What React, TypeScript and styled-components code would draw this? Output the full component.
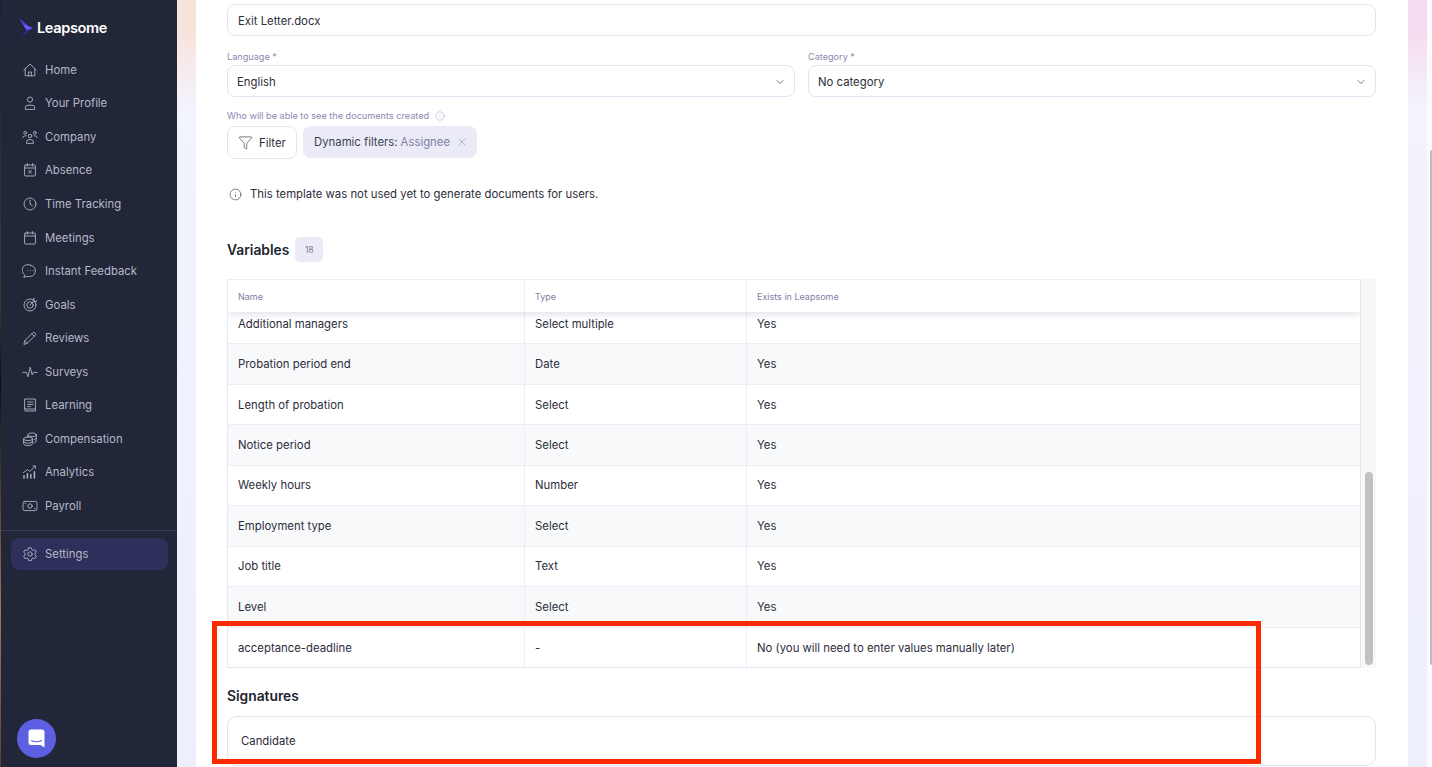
import React from 'react'
import styled, { createGlobalStyle } from 'styled-components'
import { ChevronDown, Funnel, Info, X } from 'lucide-react'

const GlobalStyle = createGlobalStyle`
  html, body {
    margin: 0;
    padding: 0;
    height: 100%;
    overflow: hidden;
    background: #ffffff;
    font-family: "Inter", "Lato", sans-serif;
  }
  #root { height: 100%; }
  * { box-sizing: border-box; }
`

const Page = styled.div`
  position: relative;
  display: flex;
  width: 1432px;
  height: 767px;
  overflow: hidden;
`

const WallpaperEdge = styled.div`
  width: 1px;
  flex: none;
  background: linear-gradient(180deg, #16223a 0%, #1f3a3a 25%, #3a3a30 40%, #0c0c10 50%, #a07a50 80%, #5a4038 100%);
`

const Sidebar = styled.nav`
  width: 176px;
  flex: none;
  background: #222639;
  display: flex;
  flex-direction: column;
  position: relative;
`

const Brand = styled.div`
  display: flex;
  align-items: center;
  gap: 3px;
  height: 53px;
  padding: 2px 0 0 17px;
  color: #ffffff;
  font-size: 14.6px;
  font-weight: 600;
  letter-spacing: -0.4px;
`

const NavList = styled.div`
  display: flex;
  flex-direction: column;
  padding-left: 10px;
`

const NavItem = styled.div`
  display: flex;
  align-items: center;
  height: 33.55px;
  gap: 7px;
  padding-left: 10px;
  color: #b6b9c8;
  font-size: 11.35px;
`

const IconSlot = styled.span`
  width: 17px;
  height: 17px;
  flex: none;
  display: flex;
  align-items: center;
  justify-content: center;
  color: #b0b3c4;
`

const NavDivider = styled.div`
  height: 1px;
  margin-top: 7px;
  background: #3a3e52;
`

const ActiveItem = styled(NavItem)`
  height: 32px;
  width: 157px;
  margin: 7px 0 0 10px;
  background: #2f2f5c;
  border-radius: 8px;
`

const ChatBubble = styled.div`
  position: absolute;
  left: 16px;
  bottom: 9px;
  width: 39px;
  height: 39px;
  border-radius: 50%;
  background: #5c5fe0;
  display: flex;
  align-items: center;
  justify-content: center;
`

const Backdrop = styled.div<{ $top: string }>`
  flex: none;
  width: 19px;
  background: linear-gradient(180deg, ${(p) => p.$top} 0%, ${(p) => p.$top} 4%, #f3f3fd 14%, #eeeffc 100%);
`

const Card = styled.main`
  width: 1212px;
  flex: none;
  background: #ffffff;
  padding: 4px 32px 0 31px;
  color: #2b2d3a;
  font-size: 11.35px;
`

const TextField = styled.div`
  height: 32px;
  border: 1px solid #e4e3f3;
  border-radius: 8px;
  display: flex;
  align-items: center;
  justify-content: space-between;
  padding: 1px 8px 0 10px;
  background: #ffffff;
`

const SelectField = styled(TextField)`
  padding-left: 9px;
`

const FieldRow = styled.div`
  display: grid;
  grid-template-columns: 1fr 1fr;
  gap: 13px;
  margin-top: 12px;
`

const FieldLabel = styled.div<{ $top?: number }>`
  color: #8b88ae;
  font-size: 9.15px;
  line-height: 17px;
  height: 17px;
  margin-top: ${(p) => p.$top ?? 0}px;
  display: flex;
  align-items: center;
  gap: 6px;
`

const FilterRow = styled.div`
  display: flex;
  gap: 6px;
  margin-top: 2px;
`

const FilterButton = styled.div`
  height: 33px;
  width: 70px;
  border: 1px solid #e4e3f3;
  border-radius: 8px;
  display: flex;
  align-items: center;
  gap: 6px;
  padding-left: 10px;
`

const Chip = styled.div`
  height: 32px;
  width: 174px;
  background: #ebebf7;
  border-radius: 8px;
  display: flex;
  align-items: center;
  padding-left: 11px;
  gap: 3px;
  color: #3d3f52;
`

const ChipValue = styled.span`
  color: #7f7da3;
  margin-right: 3px;
`

const Notice = styled.div`
  display: flex;
  align-items: center;
  gap: 8px;
  margin: 27px 0 0 2px;
  height: 16px;
`

const SectionHeading = styled.div<{ $top: number }>`
  display: flex;
  align-items: center;
  gap: 6px;
  margin-top: ${(p) => p.$top}px;
  font-size: 13.8px;
  font-weight: 600;
  color: #22242f;
  height: 25px;
`

const CountBadge = styled.span`
  width: 28px;
  height: 25px;
  background: #ebebf7;
  border-radius: 5px;
  color: #7f7da3;
  font-size: 8.6px;
  font-weight: 400;
  display: flex;
  align-items: center;
  justify-content: center;
`

const TableFrame = styled.div`
  position: relative;
  margin-top: 17px;
  height: 389px;
  display: flex;
  overflow: hidden;
`

const TableArea = styled.div`
  flex: 1;
  min-width: 0;
  border-left: 1px solid #e9e8f5;
  border-top: 1px solid #eeedf7;
  border-right: 1px solid #e4e3f3;
  border-bottom: 1px solid #e4e3f3;
  overflow: hidden;
  position: relative;
`

const Row = styled.div<{ $striped?: boolean }>`
  display: grid;
  grid-template-columns: 297px 222px 1fr;
  height: 40.45px;
  background: ${(p) => (p.$striped ? '#f8f9fb' : '#ffffff')};
  border-bottom: 1px solid #eeedf7;
  &:last-child { border-bottom: none; }
`

const HeaderRow = styled(Row)`
  position: relative;
  z-index: 1;
  height: 32px;
  background: #ffffff;
  border-bottom: none;
  box-shadow: 0 2px 8px rgba(60, 58, 110, 0.16);
  margin-bottom: -8px;
`

const Cell = styled.div`
  display: flex;
  align-items: center;
  padding-left: 10px;
  border-right: 1px solid #eeedf7;
  &:last-child { border-right: none; }
`

const HeaderCell = styled(Cell)`
  color: #7f7da3;
  font-size: 9px;
`

const ScrollTrack = styled.div`
  width: 15px;
  flex: none;
  background: #f8f8f8;
  padding: 193px 3px 3px 4px;
`

const ScrollThumb = styled.div`
  height: 100%;
  background: #c1c1c1;
  border-radius: 4px;
`

const SignatureCard = styled.div`
  height: 50px;
  margin-top: 8px;
  border: 1px solid #e4e3f3;
  border-radius: 10px;
  display: flex;
  align-items: center;
  padding: 0 13px;
`

const OuterGutter = styled.div`
  flex: 1;
  position: relative;
  background: #fbfbfd;
`

const OuterThumb = styled.div`
  position: absolute;
  right: 0;
  top: 150px;
  width: 2px;
  height: 515px;
  background: #bdbdbd;
  border-radius: 2px 0 0 2px;
`

const Highlight = styled.div`
  position: absolute;
  left: 212px;
  top: 621px;
  width: 1049px;
  height: 143px;
  border: 5px solid #fb2a00;
  pointer-events: none;
`

const Glyph = ({ children }: { children: React.ReactNode }) => (
  <svg width="16" height="16" viewBox="0 0 16 16" fill="none" stroke="currentColor" strokeWidth="0.9" strokeLinecap="round" strokeLinejoin="round">
    {children}
  </svg>
)

const navItems: { label: string; icon: React.ReactNode }[] = [
  { label: 'Home', icon: <><path d="M1.8 8 8 2 14.2 8" /><path d="M3.2 7v6.8h9.6V7" /><path d="M6.6 13.8V10h2.8v3.8" /></> },
  { label: 'Your Profile', icon: <><circle cx="8" cy="4.6" r="2.6" /><path d="M3.3 14v-1.2a2.6 2.6 0 0 1 2.6-2.6h4.2a2.6 2.6 0 0 1 2.6 2.6V14z" /></> },
  { label: 'Company', icon: <><circle cx="8" cy="7" r="1.7" /><path d="M4.6 14v-1a2.4 2.4 0 0 1 2.4-2.4h2a2.4 2.4 0 0 1 2.4 2.4v1z" /><circle cx="3.2" cy="3.8" r="1.4" /><circle cx="12.8" cy="3.8" r="1.4" /><path d="M0.8 8.6a2.4 2.4 0 0 1 2.4-1.8h1" /><path d="M15.2 8.6a2.4 2.4 0 0 0-2.4-1.8h-1" /></> },
  { label: 'Absence', icon: <><rect x="2.6" y="3" width="10.8" height="11" rx="1" /><path d="M2.6 6h10.8M5.4 1.6v2.4M10.6 1.6v2.4M6.6 8.4l2.8 2.8M9.4 8.4l-2.8 2.8" /></> },
  { label: 'Time Tracking', icon: <><circle cx="8" cy="8" r="6" /><path d="M8 4.2V8l2.4 1.8" /></> },
  { label: 'Meetings', icon: <><rect x="2.6" y="3" width="10.8" height="11" rx="1" /><path d="M2.6 6h10.8M5.4 1.6v2.4M10.6 1.6v2.4" /></> },
  { label: 'Instant Feedback', icon: <><path d="M8.8 2.4a5.6 5.6 0 0 1 0 11H5L1.8 14.4l1-2.4a5.6 5.6 0 0 1 6-9.6z" /><path d="M5.8 7.6h.1M8.6 7.6h.1M11.2 7.6h.1" /></> },
  { label: 'Goals', icon: <><circle cx="8" cy="8" r="6" /><circle cx="8" cy="8" r="3.2" /><path d="M8 8l4.6-4.6M11 3.4V2l1.4-.6M12.6 5h1.4l.6-1.4" /></> },
  { label: 'Reviews', icon: <><path d="M2 14l.9-3.4L10.8 2.7a1.4 1.4 0 0 1 2 0l.5.5a1.4 1.4 0 0 1 0 2L5.4 13.1z" /><path d="M9.8 3.8l2.4 2.4M2.9 10.6l2.5 2.5" /></> },
  { label: 'Surveys', icon: <path d="M0.8 8.4h3.6L6 12.8l2.2-9.6 2 7.6 1-2.4h4" /> },
  { label: 'Learning', icon: <><path d="M3 2h10.4v10H3z" /><path d="M3 12v2h10.4v-2M5.6 5h5.4M5.6 7.4h5.4M5.6 9.6h2.8" /></> },
  { label: 'Compensation', icon: <><ellipse cx="10" cy="3.8" rx="4.2" ry="1.8" /><path d="M14.2 3.8v6.4c0 .8-1 1.4-2.2 1.6M14.2 7c0 .8-1 1.5-2.2 1.7M5.8 4.4v2" /><ellipse cx="6" cy="7.8" rx="4.4" ry="1.8" /><path d="M1.6 7.8v5c0 1 2 1.8 4.4 1.8s4.4-.8 4.4-1.8v-5M1.6 10.4c0 1 2 1.8 4.4 1.8s4.4-.8 4.4-1.8" /></> },
  { label: 'Analytics', icon: <><path d="M1.4 8.6l4-3 2.4 1.8 5.4-5M10.8 2h2.6v2.4" /><path d="M2 14v-2.2M5.4 14V9.8M8.8 14v-3.4M12.4 14V7.8" strokeWidth="1.5" /></> },
  { label: 'Payroll', icon: <><rect x="1" y="3.4" width="14" height="9.2" rx="1.8" /><circle cx="8" cy="8" r="2.2" /><path d="M3 5.4h.6M12.4 10.6h.6" /></> },
]

const variables = [
  ['Additional managers', 'Select multiple', 'Yes'],
  ['Probation period end', 'Date', 'Yes'],
  ['Length of probation', 'Select', 'Yes'],
  ['Notice period', 'Select', 'Yes'],
  ['Weekly hours', 'Number', 'Yes'],
  ['Employment type', 'Select', 'Yes'],
  ['Job title', 'Text', 'Yes'],
  ['Level', 'Select', 'Yes'],
  ['acceptance-deadline', '-', 'No (you will need to enter values manually later)'],
]

const LeapsomeMark = () => (
  <svg width="16" height="20" viewBox="0 0 16 20">
    <path d="M1 0 L14 11 L8 12 Z" fill="#4a3fd8" />
    <path d="M14 11 L8 12 L3 19 Z" fill="#2f2a8f" />
    <path d="M5 6 L15 10 L9 12 Z" fill="#6a5cff" />
  </svg>
)

const MessengerIcon = () => (
  <svg width="17" height="19" viewBox="0 0 17 19">
    <path d="M3 0.5 H14 A2.5 2.5 0 0 1 16.5 3 V18.5 L12.5 16 H3 A2.5 2.5 0 0 1 0.5 13.5 V3 A2.5 2.5 0 0 1 3 0.5 Z" fill="#ffffff" />
    <path d="M3.5 11.5 Q8.5 14 13.5 11.5" fill="none" stroke="#5c5fe0" strokeWidth="1.1" strokeLinecap="round" />
  </svg>
)

const SettingsGlyph = () => (
  <Glyph>
    <path d="M6.6 1.8h2.8l.4 1.8 1.4.8 1.8-.6 1.4 2.4-1.4 1.2v1.6l1.4 1.2-1.4 2.4-1.8-.6-1.4.8-.4 1.8H6.6l-.4-1.8-1.4-.8-1.8.6-1.4-2.4 1.4-1.2V7.4L1.6 6.2 3 3.8l1.8.6 1.4-.8z" />
    <circle cx="8" cy="8" r="2.2" />
  </Glyph>
)

export default function App() {
  return (
    <Page>
      <GlobalStyle />
      <WallpaperEdge />
      <Sidebar>
        <Brand>
          <LeapsomeMark />
          Leapsome
        </Brand>
        <NavList>
          {navItems.map(({ label, icon }) => (
            <NavItem key={label}>
              <IconSlot><Glyph>{icon}</Glyph></IconSlot>
              {label}
            </NavItem>
          ))}
        </NavList>
        <NavDivider />
        <ActiveItem>
          <IconSlot><SettingsGlyph /></IconSlot>
          Settings
        </ActiveItem>
        <ChatBubble><MessengerIcon /></ChatBubble>
      </Sidebar>
      <Backdrop $top="#f8e3dc" />
      <Card>
        <TextField>Exit Letter.docx</TextField>
        <FieldRow>
          <div>
            <FieldLabel>Language *</FieldLabel>
            <SelectField>English<ChevronDown size={12} strokeWidth={1.3} /></SelectField>
          </div>
          <div>
            <FieldLabel>Category *</FieldLabel>
            <SelectField>No category<ChevronDown size={12} strokeWidth={1.3} /></SelectField>
          </div>
        </FieldRow>
        <FieldLabel $top={10}>
          Who will be able to see the documents created
          <Info size={10} strokeWidth={1} />
        </FieldLabel>
        <FilterRow>
          <FilterButton><Funnel size={15} strokeWidth={1} />Filter</FilterButton>
          <Chip>
            Dynamic filters: <ChipValue>Assignee</ChipValue>
            <X size={12} strokeWidth={1} color="#7f7da3" />
          </Chip>
        </FilterRow>
        <Notice>
          <Info size={13} strokeWidth={1.1} />
          This template was not used yet to generate documents for users.
        </Notice>
        <SectionHeading $top={35}>
          Variables
          <CountBadge>18</CountBadge>
        </SectionHeading>
        <TableFrame>
          <TableArea>
            <HeaderRow>
              <HeaderCell>Name</HeaderCell>
              <HeaderCell>Type</HeaderCell>
              <HeaderCell>Exists in Leapsome</HeaderCell>
            </HeaderRow>
            {variables.map((row, i) => (
              <Row key={row[0]} $striped={i % 2 === 1}>
                {row.map((value) => <Cell key={value}>{value}</Cell>)}
              </Row>
            ))}
          </TableArea>
          <ScrollTrack><ScrollThumb /></ScrollTrack>
        </TableFrame>
        <SectionHeading $top={15}>Signatures</SectionHeading>
        <SignatureCard>Candidate</SignatureCard>
      </Card>
      <Backdrop $top="#f6dcf0" />
      <OuterGutter><OuterThumb /></OuterGutter>
      <Highlight />
    </Page>
  )
}
